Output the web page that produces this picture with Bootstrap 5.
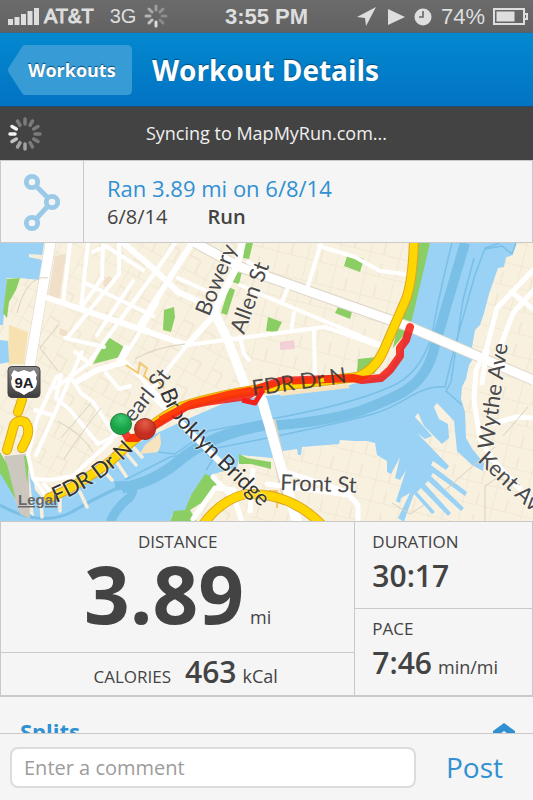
<!DOCTYPE html>
<html lang="en">
<head>
<meta charset="utf-8">
<meta name="viewport" content="width=device-width, initial-scale=1">
<title>Workout Details</title>
<link href="https://cdn.jsdelivr.net/npm/bootstrap@5.3.0/dist/css/bootstrap.min.css" rel="stylesheet">
<style>
  body { font-family: "Open Sans", "Noto Sans", sans-serif; background: #f5f5f5; color: #434343; }
  a { text-decoration: none; }
  .status-bar { height: 33px; background: linear-gradient(#6b6b6b, #626262); color: #dedede; font: 700 20px/33px "Liberation Sans", Arial, sans-serif; border-bottom: 1px solid #4c626f; }
  .status-bar .network { font-weight: 400; }
  .status-bar .carrier { font-weight: 400; -webkit-text-stroke: 1px #dedede; }
  .status-bar .clock { font-size: 22px; }
  .title-bar { height: 74px; background: linear-gradient(#0389cf, #0273c3); border-bottom: 1px solid #1f4c6e; }
  .title-bar h1 { font-size: 28px; line-height: 40px; font-weight: 700; text-shadow: 0 -1px 1px #044a78; }
  .back-link { position: relative; width: 124px; height: 50px; padding-left: 20px; font-size: 18px; line-height: 50px; text-shadow: 0 -1px 1px #044a78; }
  .back-link svg { position: absolute; inset: 0; }
  .back-link span { position: relative; }
  .sync-bar { height: 53px; background: #434343; color: #f0f0f0; font-size: 18px; }
  .sync-bar svg { position: absolute; left: 7px; top: 9px; }
  .line { border-color: #c9c9c9 !important; }
  .summary { height: 83px; }
  .route-icon { width: 83px; }
  .summary-text { padding-left: 23px; }
  .blue { color: #3190d2; }
  .summary h2 { font-size: 22px; line-height: 30px; font-weight: 500; }
  .summary p { font-size: 20px; line-height: 28px; }
  .map { display: block; width: 100%; height: auto; }
  .map-labels { font-family: "Lato", "Open Sans", sans-serif; }
  .stats { height: 176px; border-bottom: 2px solid #cfcfcf; }
  .main-stat { flex: 2 1 0; }
  .side-stats { flex: 1 1 0; }
  .side-stats > div { padding-left: 17px; }
  .stat-label { font-size: 17px; line-height: 24px; }
  .unit { font-size: 18px; line-height: 20px; margin-left: 6px; }
  .huge { font-size: 80px; line-height: 78px; font-weight: 700; }
  .big { font-size: 30px; line-height: 44px; font-weight: 600; }
  .calories { height: 43px; }
  .calories .stat-label { margin-right: 14px; }
  .calories .big { line-height: 38px; }
  .duration { height: 87px; }
  .splits-title { font-size: 22px; line-height: 28px; font-weight: 700; }
  .comment-bar { height: 67px; background: #f5f5f5; padding-left: 10px; }
  .comment-bar input { height: 41px; border: 2px solid #dcdcdc; border-radius: 8px; font-size: 20px; }
  .comment-bar input::placeholder { color: #9c9c9c; }
  .post-button { width: 117px; font-size: 28px; line-height: 40px; }
</style>
<script src="https://cdn.jsdelivr.net/npm/bootstrap@5.3.0/dist/js/bootstrap.bundle.min.js"></script>
</head>
<body>
<div class="d-flex flex-column vh-100">
  <div class="status-bar flex-shrink-0 d-flex align-items-center px-1">
    <div class="col d-flex align-items-center">
      <svg class="ms-1 me-1" width="32" height="17" viewBox="0 0 32 17" fill="#dedede" aria-hidden="true"><path d="M0 11h5v6H0zM6.500 9h5v8h-5zM13 6h5v11h-5zM19.500 3h5v14h-5zM26 0h5v17h-5z"/></svg>
      <span class="carrier">AT&amp;T</span><span class="network ms-3">3G</span>
      <svg class="ms-2" width="24" height="24" viewBox="-12 -12 24 24" stroke="#dedede" stroke-width="3" stroke-linecap="round" aria-hidden="true"><path d="M0 6V10"/><path opacity=".8" d="M-4 4-7 7"/><path opacity=".65" d="M-6 0H-10"/><path opacity=".55" d="M-4-4-7-7"/><path opacity=".45" d="M0-6V-10"/><path opacity=".35" d="M4-4 7-7"/><path opacity=".3" d="M6 0H10M4 4 7 7"/></svg>
    </div>
    <div class="clock text-center">3:55 PM</div>
    <div class="col d-flex align-items-center justify-content-end">
      <svg width="76" height="21" viewBox="0 0 76 21" fill="#dedede" aria-hidden="true"><path d="M19 1 0 11l8 1 1 8zM31 3v16l17-8z"/><circle cx="66" cy="11" r="8.500"/><path d="M66 5v6h-4" fill="none" stroke="#666" stroke-width="1.600"/></svg>
      <span class="ms-2 me-1 fw-normal clock">74%</span>
      <svg class="ms-1" width="36" height="17" viewBox="0 0 36 17" aria-hidden="true"><path fill="none" stroke="#dedede" stroke-width="2" d="M1 1h30v15H1zM31 6h3v5h-3"/><path fill="#dedede" d="M3.500 3.500h18v10h-18z"/></svg>
    </div>
  </div>

  <header class="title-bar flex-shrink-0 d-flex align-items-center ps-2">
    <a href="#" class="back-link text-white fw-bold">
      <svg width="124" height="50" viewBox="0 0 124 50" fill="#379bd5" aria-hidden="true"><path d="M17 0h102q5 0 5 5v40q0 5-5 5H17q-2 0-3-2L1 28q-2-3 0-6L14 2q1-2 3-2z"/></svg>
      <span>Workouts</span>
    </a>
    <h1 class="text-white mb-0 ms-3 ps-1">Workout Details</h1>
  </header>

  <div class="sync-bar position-relative flex-shrink-0 d-flex align-items-center justify-content-center" role="status">
    <svg width="36" height="36" viewBox="-18 -18 36 36" stroke-width="3.500" stroke-linecap="round" stroke="#7b7b7b" aria-hidden="true"><path d="M0-10V-15M5-8.700 7.500-13M8.700-5 13-7.500M10 0h5M8.700 5 13 7.500M5 8.700 7.500 13M-5-8.700-7.500-13"/><path stroke="#a3a3a3" d="M0 10v5M-5 8.700-7.500 13"/><path stroke="#c4c4c4" d="M-8.700 5-13 7.500"/><path stroke="#f3f3f3" d="M-10 0h-5M-8.700-5-13-7.500"/></svg>
    <span>Syncing to MapMyRun.com...</span>
  </div>

  <main class="flex-grow-1 overflow-hidden">
    <section class="summary d-flex border line">
      <div class="route-icon border-end line d-flex align-items-center justify-content-center">
        <svg width="38" height="60" viewBox="0 0 38 60" fill="none" stroke="#9bcae9" stroke-width="4.800" aria-hidden="true"><circle cx="9" cy="10" r="5.700"/><circle cx="29" cy="30" r="5.700"/><circle cx="9" cy="51" r="5.700"/><path d="m13 14 12 12M25 34 13 47"/></svg>
      </div>
      <div class="summary-text pt-2">
        <h2 class="blue mb-0 mt-1">Ran 3.89 mi on 6/8/14</h2>
        <p class="mb-0 d-flex"><span class="pe-4 me-3">6/8/14</span><strong class="fw-semibold">Run</strong></p>
      </div>
    </section>

    <svg class="map" viewBox="0 243 533 278" role="img" aria-label="Route map along FDR Dr N">
      <defs>
        <pattern id="blocks" width="24" height="30" patternUnits="userSpaceOnUse" patternTransform="rotate(28)"><path d="M0 0H24M0 0V30M0 16H12M12 16V30" stroke="#eae1ca" fill="none"/></pattern>
        <pattern id="blocks2" width="30" height="22" patternUnits="userSpaceOnUse" patternTransform="rotate(14)"><path d="M0 0H30M0 0V22M14 10V22" stroke="#eae1ca" fill="none"/></pattern>
        <path id="brooklynLabel" d="M160 392Q166 411 184 432L276 522"/>
        <path id="fdrLabel" d="M56 503Q100 485 136 448"/>
        <linearGradient id="badgeFill" x2="0" y2="1"><stop stop-color="#888"/><stop offset="1" stop-color="#3c3c3c"/></linearGradient>
        <radialGradient id="startFill" cy=".25"><stop stop-color="#3fc870"/><stop offset="1" stop-color="#19a347"/></radialGradient>
        <radialGradient id="endFill" cy=".25"><stop stop-color="#e25e48"/><stop offset="1" stop-color="#c62c20"/></radialGradient>
      </defs>
      <rect y="243" width="533" height="279" fill="#f8f1e0"/>
      <rect y="243" width="250" height="279" fill="url(#blocks)"/>
      <rect x="250" y="243" width="283" height="279" fill="url(#blocks2)"/>
      <path fill="#f0dfc9" d="M55 256 66 254 59 302 48 298zM104 280l5-4 5 4-5 9-6-4zM60 328l8 3-3 6-6-3z"/>
      <path fill="#f8e1b0" d="m9 325 19 7-4 32H8z"/>
      <path fill="#f3d0d8" d="M280 342l14-2 1 9-15 1z"/>
      <!-- Hudson -->
      <g fill="#99d2f5"><path d="M0 243h44l-2 12-13-1v3l13 3-3 20-19-2H7L3 325H0zM0 340l8 1 1 21-9 2z"/></g>
      <!-- East River and harbour -->
      <path fill="#9ad2f6" d="M0 470 4 462 15 500 34 517 29 470 32 470 35 490 44 500 60 498 100 471 132 446 157 433 183 421 229 401 265 396 284 394 346 386 387 374 402 348 405 325 430 243H516L511 256 506 257 504 267 498 268 489 294 484 313 480 325 475 330 472 347 474 357 469 365 466 379 462 387 461 399 465 412 466 438 473 450 484 463 483 471 472 465 457 451 454 421 437 403 434 407 439 419 448 424 449 438 442 444 424 426 418 413 415 417 432 436 425 439 417 433 449 466 446 470 433 461 431 465 467 492 465 496 433 473 431 476 464 508 461 511 428 481 425 484 451 513 448 516 421 488 417 492 435 512 432 514 414 494 408 510 404 522 398 518 410 493 401 498 400 503 396 501 406 470 400 480 395 478 400 457 391 474 387 472 387 461 377 455 375 443 367 441 355 441 340 440 339 444 302 447 301 455 298 455 297 449 283 451 281 455 272 458 240 455 237 468 213 474 205 487 190 496 189 513 172 515 170 522H0z"/>
      <g fill="none" stroke="#7abfe5">
        <path stroke-width="10" d="M465 243Q448 300 432 356C422 387 400 396 360 411Q320 423 266 426"/>
        <path stroke-width="11" d="M266 425Q216 433 185 456C165 474 145 484 122 488"/>
        <path stroke-width="9" d="M115 486Q139 483 130 497 116 508 110 522"/>
        <path stroke-width="3" d="M0 505Q40 528 72 512 100 495 127 484"/>
        <path stroke-width="1.500" d="M452 243Q440 290 432 335 420 375 390 387 350 405 266 420L208 431 175 454 158 452M500 243 485 248 475 275 455 346 445 387C417 385 405 405 373 414 330 426 260 440 170 457L125 480M516 243l-4 11-10-8-17 3M474 258 463 300 451 382 446 391 462 405M205 450l7 11-6 9"/>
      </g>
      <g fill="none" stroke="#f7eedb" stroke-width="3.500" stroke-linecap="round"><path d="m103 470 9 10M116 461l10 15M126 453l10 12M134 448l8 9M80 492l7 15M60 497v14M41 500l1 17"/></g>
      <path fill="#f7e4be" d="m145 445 15-12 1 11-3 8-18 2zM281 392l66-8 3 4-70 8z"/>
      <path fill="#ccc8c0" d="m4 456 22-2 3 25 1 40-10-5-10-29z"/>
      <!-- parks -->
      <g fill="#8bce63"><path d="M7 279 20 278 16 290 9 302 7 318 3 313zM108 337 126 348 120 357 93 364zM164 310l10-3 1 10-4 15-8-2zM245 243h8l-4 16-6-1zM236 267h7l-4 17-7-2zM229 287l6 3-8 25-6-2zM348 253l16 6-4 13-16-6zM338 307l14 5-2 7-15-6zM268 317l14 5-5 10-11-1zM418 243h12l-20 85-17 20 4-21zM358 359l28-3-12 18-17-2zM0 452l7 12 9 36-16-27zM24 456l3 27 3-27zM205 474 219 479 211 497 190 510 197 522H170l4-11 11-1 6-15zM239 454l8 4 24 4v7l-20-5-12 0z"/></g>
      <!-- streets -->
      <g fill="none" stroke="#ddd6c7" stroke-linejoin="round"><path stroke-width="11" d="M51 240 29 370M190 240 240 267 410 327 533 380M270 420 287 495"/></g>
      <g fill="none" stroke="#fff" stroke-linejoin="round" stroke-linecap="round">
        <path stroke-width="10" d="M51 240 29 370M262 400 297 522"/>
        <path stroke-width="7" d="M243 240 237 266 214 312"/>
        <path stroke-width="9" d="M190 240 240 267 410 327 533 380M214 312 227 338 245 385"/>
        <path stroke-width="6" d="M120 240 156 271 178 292 205 304M124 362 95 371 78 381M126 348 120 360M48 298 187 345 217 312M192 243 140 325M145 388 176 418 226 468"/>
        <path stroke-width="4" d="M177 240 156 271 88 364 55 388M70 243 63 303M88 243 81 308M93 252 106 246 143 270M119 240V274L68 337M103 245 102 279M85 283 153 316M81 308 102 278M65 338 104 347M75 352 90 364M133 281 97 335M157 303 133 343 124 357M140 325 153 334M127 363 154 392 174 408M187 345 325 327 385 348M187 345 132 414 112 437M82 352 36 455M61 375 56 398 70 410 98 444 116 436M57 376 37 419 28 455 33 478 44 493M70 376 81 393 93 402 115 435M35 410 52 415M10 380 22 400M178 278 211 293M240 285 267 297 389 348M248 262 267 273M321 243 308 286M289 285 282 302M294 313 291 331M314 330 315 382M319 246 355 257 380 271 405 274M240 337 244 354 249 360M36 479 50 480 73 476 112 440M44 484 49 490M106 373 119 389 130 386"/>
        <path stroke-width="5" d="M533 270 497 308 486 350 476 370 474 400 480 439 492 459 533 503M533 291 513 313 498 353M511 292 533 309M487 350 482 383M495 423 517 417 533 418M267 484 349 495 358 505 358 522M213 477 235 500 242 522M193 519 215 488 234 490M253 470 250 511M281 477 290 473 350 493"/>
      </g>
      <path fill="none" stroke="#d9d1c0" d="M135 359Q156 347 185 344M48 278Q27 274 17 313M58 325 40 348 58 371M91 403 61 438M101 408Q83 430 64 459M58 421Q84 436 93 452M392 503 410 514 424 505M445 490 495 447M485 522V486L497 478 520 485M503 436 528 407"/>
      <path fill="none" stroke="#f2c76e" stroke-width="2" d="m126 365 12 8 2-10 7 5-3 8 9 7 4-3 7 8M269 491h8v17"/>
      <!-- expressways -->
      <g fill="none" stroke-linecap="round" stroke-linejoin="round">
        <g stroke="#dda61c" stroke-width="10"><path d="M414 238Q413 280 406 299L383 352Q374 371 357 377L272 387Q211 396 181 407 150 423 112 460 75 488 49 498M22 400 18 412M7 450 14 425Q17 419 25 422 31 429 26 440L22 448M202 526Q220 500 246 494 292 493 323 526"/></g>
        <g stroke="#ffd602" stroke-width="8"><path d="M414 238Q413 280 406 299L383 352Q374 371 357 377L272 387Q211 396 181 407 150 423 112 460 75 488 49 498M22 400 18 412M7 450 14 425Q17 419 25 422 31 429 26 440L22 448M202 526Q220 500 246 494 292 493 323 526"/></g>
      </g>
      <!-- labels -->
      <g class="map-labels" font-size="22" fill="#4a4a4a" stroke="#fff" stroke-opacity=".4" stroke-width="2" paint-order="stroke">
        <text transform="translate(209 317) rotate(-68)">Bowery</text>
        <text transform="translate(244 335) rotate(-70)">Allen St</text>
        <text transform="translate(125 433) rotate(-51)">Pearl St</text>
        <text transform="translate(280 490) rotate(2)">Front St</text>
        <text transform="translate(493 450) rotate(-82)">Wythe Ave</text>
        <text transform="translate(477 461) rotate(43)">Kent Ave</text>
        <text fill="#333"><textPath href="#brooklynLabel">Brooklyn Bridge</textPath></text>
        <text fill="#333"><textPath href="#fdrLabel">FDR Dr N</textPath></text>
      </g>
      <!-- recorded route -->
      <path fill="none" stroke="#f5150c" stroke-width="8" stroke-opacity=".84" stroke-linecap="round" stroke-linejoin="round" d="M121 426 128 438 137 438 157 424 187 406 205 402 247 396 260 388 280 381 353 378 362 380 381 378 390 370 400 356 400 348 406 340 410 327"/>
      <path fill="none" stroke="#f4201b" stroke-width="5" stroke-linejoin="round" d="M242 400 255 403 263 390"/>
      <path fill="none" stroke="#ff3c0a" stroke-width="5" stroke-linejoin="round" d="M160 419 190 403 230 393 252 389"/>
      <path fill="none" stroke="#ffd602" stroke-width="4" d="m282 386 10-1M318 381l6-1"/>
      <text class="map-labels" font-size="22" fill="#333" fill-opacity=".85" transform="translate(253 396) rotate(-8)">FDR Dr N</text>
      <circle cx="121" cy="424" r="10.500" fill="url(#startFill)" stroke="#287c43"/>
      <circle cx="145" cy="429" r="10.500" fill="url(#endFill)" stroke="#903128"/>
      <rect x="8" y="366.500" width="32" height="31" rx="4" fill="url(#badgeFill)" stroke="#444"/>
      <path fill="#fff" d="m14 370 4 2 6-2 6 2 4-2 3 5q-2 3 0 6 0 9-8 11l-5 3-5-3q-8-2-8-11 2-3 0-6z"/>
      <text x="24" y="388" text-anchor="middle" font-family="Liberation Sans, Arial, sans-serif" font-size="15" font-weight="700" fill="#222">9A</text>
      <a href="#"><text x="18" y="505" font-family="Liberation Sans, Arial, sans-serif" font-size="15" font-weight="700" fill="#686868" text-decoration="underline">Legal</text></a>
    </svg>

    <section class="stats d-flex border-top border-start border-end line">
      <div class="main-stat border-end line d-flex flex-column">
        <div class="flex-grow-1 text-center pt-2">
          <div class="stat-label">DISTANCE</div>
          <div class="huge">3.89<span class="unit fw-normal">mi</span></div>
        </div>
        <div class="calories border-top line d-flex align-items-baseline justify-content-center ps-3">
          <span class="stat-label">CALORIES</span><span class="big">463</span><span class="unit">kCal</span>
        </div>
      </div>
      <div class="side-stats">
        <div class="duration border-bottom line pt-2">
          <div class="stat-label">DURATION</div>
          <div class="big">30:17</div>
        </div>
        <div class="pt-2">
          <div class="stat-label">PACE</div>
          <div class="big">7:46<span class="unit fw-normal">min/mi</span></div>
        </div>
      </div>
    </section>

    <section class="d-flex justify-content-between align-items-start pt-3 mt-1 px-3">
      <h2 class="splits-title blue mb-0 ms-1">Splits</h2>
      <svg class="mt-1" width="26" height="20" viewBox="0 0 26 20" fill="#3190d2" aria-hidden="true"><path d="M2 10 13 2l11 8v8l-11-8-11 8z"/></svg>
    </section>
  </main>

  <form class="comment-bar flex-shrink-0 border-top line d-flex align-items-center">
    <input type="text" class="form-control flex-grow-1 w-auto" placeholder="Enter a comment" aria-label="Enter a comment">
    <button type="button" class="post-button btn border-0 p-0 blue flex-shrink-0">Post</button>
  </form>
</div>
</body>
</html>
